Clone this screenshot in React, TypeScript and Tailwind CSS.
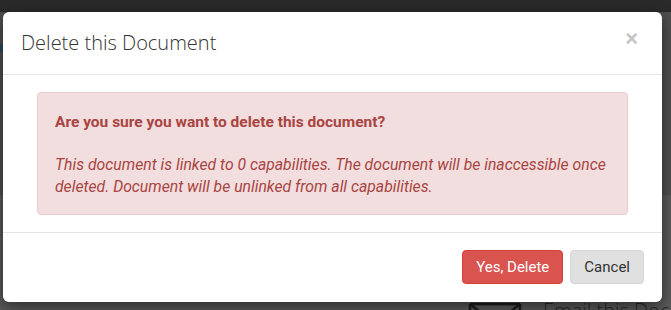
import React from "react";

export default function App() {
  return (
    <div className="relative w-[671px] h-[310px] overflow-hidden bg-[#4f4f4f]" style={{ fontFamily: "Roboto, 'Liberation Sans', sans-serif" }}>
      {/* page behind the overlay */}
      <div className="absolute left-0 top-0 w-full h-[12px] bg-[#2a2a2a]" />
      <div className="absolute left-0 top-[195px] w-full h-[115px] bg-[#5a5a5a]" />
      <div className="absolute left-[0px] top-[44px] w-[3px] h-[8px] bg-[#2e4c5c]" />
      <div className="absolute left-[468px] top-[302px]">
        <svg width="54" height="20" viewBox="0 0 54 20">
          <path d="M2 2 L52 2 M2 2 L27 22 L52 2" stroke="#1e1e1e" strokeWidth="2.5" fill="none" />
          <path d="M2 2 L2 20 M52 2 L52 20" stroke="#1e1e1e" strokeWidth="2.5" fill="none" />
        </svg>
      </div>
      <div
        className="absolute left-[543px] top-[296px] text-[20px] font-light text-[#272727] whitespace-nowrap"
        style={{ fontFamily: "'Open Sans', sans-serif" }}
      >
        Email this Document
      </div>

      {/* modal */}
      <div className="absolute left-[3px] top-[12px] w-[659px] h-[290px] bg-white rounded-[6px] shadow-[0_5px_15px_rgba(0,0,0,0.5)] flex flex-col">
        <div className="h-[63px] border-b border-[#e5e5e5] flex items-center justify-between pl-[18px] pr-[24px]">
          <h4
            className="text-[20px] font-light text-[#333] leading-[28px]"
            style={{ fontFamily: "'Open Sans', sans-serif" }}
          >
            Delete this Document
          </h4>
          <button className="text-[22px] font-bold leading-none text-[#c4c4c4] -mt-[8px]" style={{ fontFamily: "'Liberation Sans', sans-serif" }}>
            ×
          </button>
        </div>
        <div className="px-[34px] pt-[17px] pb-[17px]">
          <div className="bg-[#f2dede] border border-[#ebccd1] rounded-[4px] pl-[17px] pr-[14px] pt-[18px] pb-[16px] text-[#a94442] leading-[22px]">
            <p className="font-bold text-[15.5px]">Are you sure you want to delete this document?</p>
            <p className="italic mt-[21px] text-[15.75px]">
              This document is linked to 0 capabilities. The document will be inaccessible once deleted. Document will be unlinked from all capabilities.
            </p>
          </div>
        </div>
        <div className="border-t border-[#e5e5e5] flex-1 flex items-start justify-end gap-[7px] pt-[17px] pr-[18px]">
          <button className="h-[34px] px-[13px] rounded-[4px] bg-[#d9534f] border border-[#d43f3a] text-white text-[15px]">
            Yes, Delete
          </button>
          <button className="h-[34px] px-[13px] rounded-[4px] bg-[#e0e0e0] border border-[#d6d6d6] text-[#333] text-[15px]">
            Cancel
          </button>
        </div>
      </div>
    </div>
  );
}
